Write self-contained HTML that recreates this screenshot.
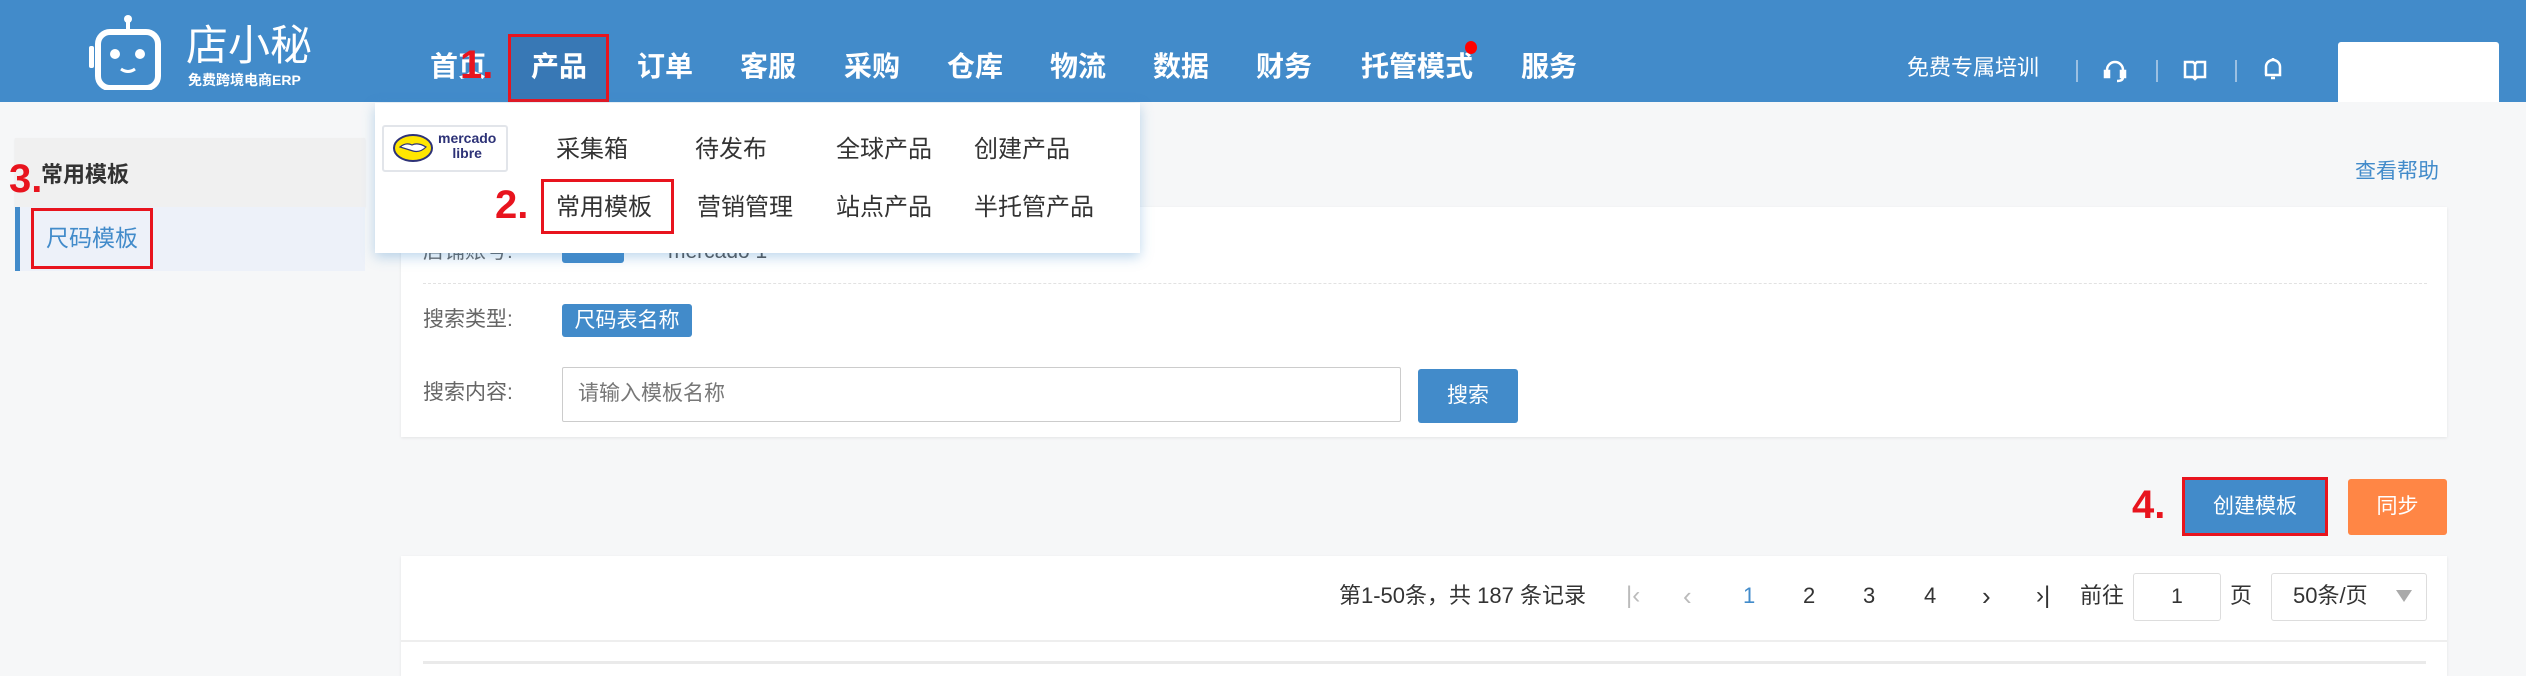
<!DOCTYPE html>
<html><head><meta charset="utf-8"><style>
*{margin:0;padding:0;box-sizing:border-box}
body{width:2526px;height:664px;overflow:hidden;background:#f6f7f8;font-family:"Liberation Sans","Noto Sans CJK SC",sans-serif;position:relative;color:#333}
.a{position:absolute;white-space:nowrap}
.hdr{left:0;top:0;width:2526px;height:102px;background:#428bca}
.nav{top:51px;font-size:28px;font-weight:bold;color:#fff;line-height:32px}
.red{color:#e8141e;font-weight:bold;font-family:"Liberation Sans",sans-serif}
.rbox{border:3px solid #e8141e}
.dd{font-size:24px;color:#333;line-height:28px}
.lbl{font-size:21px;color:#666;line-height:24px}
.pg{font-size:22px;color:#333;line-height:26px;top:583px}
</style></head><body>
<div class="a hdr"></div>
<svg class="a" style="left:88px;top:12px" width="74" height="78" viewBox="0 0 74 78">
<circle cx="40" cy="7" r="4" fill="#fff"/><rect x="38" y="8" width="4" height="12" fill="#fff"/>
<rect x="10" y="20" width="60" height="56" rx="12" fill="none" stroke="#fff" stroke-width="6"/>
<rect x="1" y="34" width="5" height="22" rx="2" fill="#fff"/><rect x="74" y="34" width="5" height="22" fill="#fff"/>
<circle cx="27" cy="42" r="5" fill="#fff"/><circle cx="52" cy="42" r="5" fill="#fff"/>
<path d="M33 57 q7 5 14 0" stroke="#fff" stroke-width="3" fill="none"/>
</svg>
<div class="a" style="left:186px;top:22px;font-size:42px;color:#fff;line-height:48px">店小秘</div>
<div class="a" style="left:188px;top:72px;font-size:14px;color:#fff;font-weight:bold;line-height:16px">免费跨境电商ERP</div>
<div class="a" style="left:508px;top:34px;width:101px;height:68px;background:#3878b5"></div>
<div class="a rbox" style="left:508px;top:34px;width:101px;height:68px"></div>
<div class="a nav" style="left:430px">首页</div>
<div class="a red" style="left:460px;top:44px;font-size:40px;line-height:42px">1.</div>
<div class="a nav" style="left:531px">产品</div>
<div class="a nav" style="left:637px">订单</div>
<div class="a nav" style="left:740px">客服</div>
<div class="a nav" style="left:844px">采购</div>
<div class="a nav" style="left:947px">仓库</div>
<div class="a nav" style="left:1050px">物流</div>
<div class="a nav" style="left:1153px">数据</div>
<div class="a nav" style="left:1256px">财务</div>
<div class="a nav" style="left:1361px">托管模式</div>
<div class="a" style="left:1465px;top:41px;width:12px;height:13px;border-radius:50%;background:#f00"></div>
<div class="a nav" style="left:1521px">服务</div>
<div class="a" style="left:1907px;top:55px;font-size:22px;color:#fff;line-height:26px">免费专属培训</div>
<div class="a" style="left:2076px;top:60px;width:2px;height:22px;background:#9cc0e2"></div>
<div class="a" style="left:2156px;top:60px;width:2px;height:22px;background:#9cc0e2"></div>
<div class="a" style="left:2235px;top:60px;width:2px;height:22px;background:#9cc0e2"></div>
<svg class="a" style="left:2102px;top:58px" width="26" height="26" viewBox="0 0 26 26" fill="none" stroke="#fff" stroke-width="2.5"><path d="M5 16V12a8 8 0 0 1 16 0v4"/><rect x="3" y="13" width="4" height="6" fill="#fff"/><rect x="19" y="13" width="4" height="6" fill="#fff"/><path d="M21 19q0 4-6 4"/></svg>
<svg class="a" style="left:2183px;top:58px" width="24" height="24" viewBox="0 0 24 24" fill="none" stroke="#fff" stroke-width="2.5"><path d="M2 4h8l2 2 2-2h8v15h-8l-2 2-2-2H2z"/><path d="M12 6v14"/></svg>
<svg class="a" style="left:2262px;top:56px" width="22" height="26" viewBox="0 0 22 26" fill="none" stroke="#fff" stroke-width="2.5"><path d="M4 19V11a7 7 0 0 1 14 0v8H3h16"/><path d="M9 22h4"/><path d="M11 2v3"/></svg>
<div class="a" style="left:2338px;top:42px;width:161px;height:60px;background:#fff;border-radius:3px 3px 0 0"></div>

<div class="a" style="left:15px;top:138px;width:350px;height:69px;background:#f0f0f0;box-shadow:0 1px 2px rgba(0,0,0,.08)"></div>
<div class="a" style="left:41px;top:162px;font-size:22px;font-weight:bold;color:#333;line-height:26px">常用模板</div>
<div class="a red" style="left:9px;top:158px;font-size:40px;line-height:42px">3.</div>
<div class="a" style="left:15px;top:207px;width:350px;height:64px;background:#edf1f9"></div>
<div class="a" style="left:15px;top:207px;width:5px;height:64px;background:#428bca"></div>
<div class="a" style="left:46px;top:225px;font-size:23px;color:#428bca;line-height:26px">尺码模板</div>
<div class="a rbox" style="left:31px;top:208px;width:122px;height:61px"></div>

<div class="a" style="left:2355px;top:159px;font-size:21px;color:#428bca;line-height:26px">查看帮助</div>

<div class="a" style="left:401px;top:207px;width:2046px;height:230px;background:#fff;box-shadow:0 1px 3px rgba(0,0,0,.08)"></div>
<div class="a lbl" style="left:423px;top:240px">店铺账号:</div>
<div class="a" style="left:562px;top:236px;width:62px;height:27px;background:#428bca;border-radius:3px"></div>
<div class="a" style="left:668px;top:240px;font-size:21px;color:#555">mercado 1</div>
<div class="a" style="left:423px;top:283px;width:2004px;border-top:1px dashed #e2e2e2"></div>
<div class="a lbl" style="left:423px;top:308px">搜索类型:</div>
<div class="a" style="left:562px;top:304px;width:130px;height:33px;background:#428bca;border-radius:3px;color:#fff;font-size:21px;line-height:33px;text-align:center">尺码表名称</div>
<div class="a lbl" style="left:423px;top:381px">搜索内容:</div>
<div class="a" style="left:562px;top:367px;width:839px;height:55px;border:1px solid #ccc;border-radius:2px;background:#fff"></div>
<div class="a" style="left:578px;top:381px;font-size:21px;color:#777;line-height:26px">请输入模板名称</div>
<div class="a" style="left:1418px;top:369px;width:100px;height:54px;background:#428bca;border-radius:3px;color:#fff;font-size:21px;line-height:54px;text-align:center">搜索</div>

<div class="a" style="left:375px;top:103px;width:765px;height:150px;background:#fff;box-shadow:0 4px 12px rgba(66,139,202,.35)"></div>
<div class="a" style="left:382px;top:125px;width:126px;height:47px;border:2px solid #e2e5ea;border-radius:3px;background:#fff"></div>
<svg class="a" style="left:392px;top:133px" width="42" height="30" viewBox="0 0 42 30"><ellipse cx="21" cy="15" rx="19" ry="13" fill="#ffe600" stroke="#2d3277" stroke-width="2"/><path d="M8 14q6-5 12-2q6-3 14 2q-6 6-13 4z" fill="#fff" stroke="#2d3277" stroke-width="1.2"/></svg>
<div class="a" style="left:438px;top:131px;font-size:14px;color:#2d3277;font-weight:bold;line-height:15px;text-align:center">mercado<br>libre</div>
<div class="a dd" style="left:556px;top:136px">采集箱</div>
<div class="a dd" style="left:695px;top:136px">待发布</div>
<div class="a dd" style="left:836px;top:136px">全球产品</div>
<div class="a dd" style="left:974px;top:136px">创建产品</div>
<div class="a red" style="left:495px;top:184px;font-size:40px;line-height:42px">2.</div>
<div class="a dd" style="left:556px;top:194px">常用模板</div>
<div class="a rbox" style="left:541px;top:179px;width:133px;height:55px"></div>
<div class="a dd" style="left:697px;top:194px">营销管理</div>
<div class="a dd" style="left:836px;top:194px">站点产品</div>
<div class="a dd" style="left:974px;top:194px">半托管产品</div>

<div class="a red" style="left:2132px;top:484px;font-size:40px;line-height:42px">4.</div>
<div class="a" style="left:2182px;top:477px;width:146px;height:59px;background:#428bca;color:#fff;font-size:21px;line-height:59px;text-align:center">创建模板</div>
<div class="a rbox" style="left:2182px;top:477px;width:146px;height:59px"></div>
<div class="a" style="left:2348px;top:479px;width:99px;height:56px;background:#ff8645;border-radius:3px;color:#fff;font-size:21px;line-height:56px;text-align:center">同步</div>

<div class="a" style="left:401px;top:556px;width:2046px;height:120px;background:#fff;box-shadow:0 1px 3px rgba(0,0,0,.08)"></div>
<div class="a pg" style="left:1339px">第1-50条，共 187 条记录</div>
<div class="a pg" style="left:1626px;color:#bbb;font-size:24px">|‹</div>
<div class="a pg" style="left:1683px;color:#bbb;font-size:26px">‹</div>
<div class="a pg" style="left:1743px;color:#428bca">1</div>
<div class="a pg" style="left:1803px">2</div>
<div class="a pg" style="left:1863px">3</div>
<div class="a pg" style="left:1924px">4</div>
<div class="a pg" style="left:1982px;font-size:26px">›</div>
<div class="a pg" style="left:2036px;font-size:24px">›|</div>
<div class="a pg" style="left:2080px">前往</div>
<div class="a" style="left:2133px;top:573px;width:88px;height:48px;border:1px solid #ddd;border-radius:3px;text-align:center;font-size:21px;line-height:46px">1</div>
<div class="a pg" style="left:2230px">页</div>
<div class="a" style="left:2271px;top:573px;width:156px;height:48px;border:1px solid #ddd;border-radius:3px"></div>
<div class="a pg" style="left:2293px">50条/页</div>
<div class="a" style="left:2396px;top:590px;width:0;height:0;border-left:8px solid transparent;border-right:8px solid transparent;border-top:12px solid #aaa"></div>
<div class="a" style="left:401px;top:640px;width:2046px;height:2px;background:#eee"></div>
<div class="a" style="left:423px;top:661px;width:2003px;height:3px;background:#eaeaea"></div>
</body></html>
